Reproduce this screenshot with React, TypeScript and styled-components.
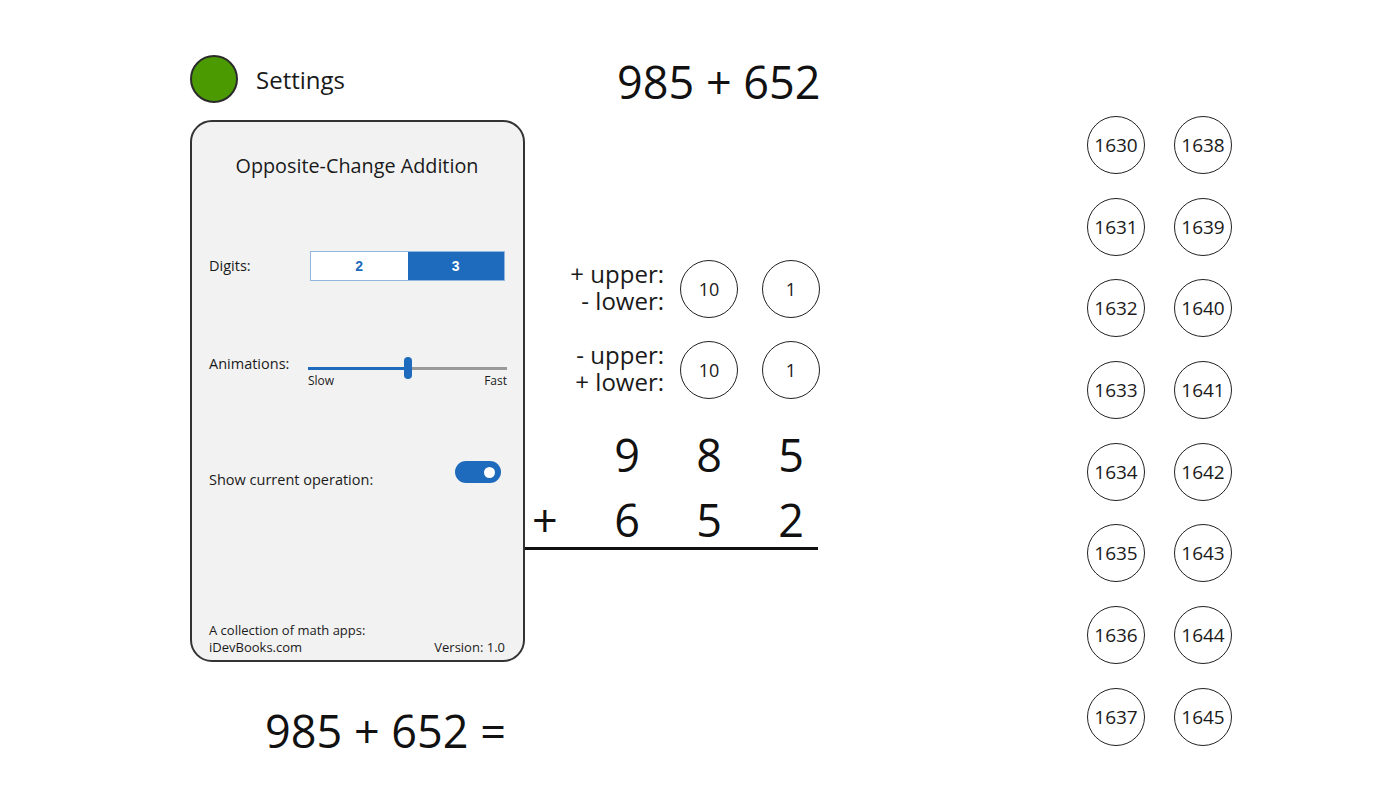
import styled, { createGlobalStyle } from "styled-components";

const GlobalStyle = createGlobalStyle`
    html, body {
        margin: 0;
        padding: 0;
        background: #ffffff;
    }
    body {
        font-family: "Open Sans", "Noto Sans", sans-serif;
        color: #111;
    }
`;

const Page = styled.div`
    display: flex;
    align-items: flex-start;
    padding: 55px 0 0 190px;
    width: 1399px;
    height: 787px;
    box-sizing: border-box;
    overflow: hidden;
`;

const LeftColumn = styled.div`
    width: 335px;
    display: flex;
    flex-direction: column;
`;

const Header = styled.div`
    display: flex;
    align-items: center;
    gap: 18px;
    height: 48px;
`;

const StatusDot = styled.div`
    width: 48px;
    height: 48px;
    border-radius: 50%;
    background: #4c9a02;
    border: 2px solid #2b2b2b;
    box-sizing: border-box;
`;

const HeaderText = styled.span`
    font-size: 24px;
    color: #1a1a1a;
`;

const Panel = styled.div`
    margin-top: 17px;
    height: 542px;
    box-sizing: border-box;
    border: 2px solid #333;
    border-radius: 22px;
    background: #f2f2f2;
    padding: 0 18px 4px 17px;
    display: flex;
    flex-direction: column;
`;

const PanelTitle = styled.div`
    margin-top: 31px;
    text-align: center;
    font-size: 19.8px;
    line-height: 26px;
    color: #1a1a1a;
`;

const SettingRow = styled.div<{ $top: number; $align?: string }>`
    margin-top: ${p => p.$top}px;
    display: flex;
    justify-content: space-between;
    align-items: ${p => p.$align || "center"};
`;

const Label = styled.span<{ $shift?: number }>`
    font-size: 14.5px;
    line-height: 20px;
    color: #1a1a1a;
    margin-top: ${p => p.$shift || 0}px;
`;

const Segmented = styled.div`
    display: flex;
    width: 195px;
    height: 30px;
    border: 1px solid #93b6de;
    box-sizing: border-box;
`;

const Segment = styled.div<{ $active?: boolean }>`
    flex: 1;
    display: flex;
    align-items: center;
    justify-content: center;
    font-family: "Liberation Sans", Arial, sans-serif;
    font-weight: bold;
    font-size: 14px;
    background: ${p => (p.$active ? "#1e6bbd" : "#ffffff")};
    color: ${p => (p.$active ? "#ffffff" : "#1e6bbd")};
`;

const SliderBox = styled.div`
    width: 199px;
    margin-right: -2px;
    display: flex;
    flex-direction: column;
`;

const SliderTrack = styled.div`
    position: relative;
    height: 22px;
    display: flex;
    align-items: center;
`;

const TrackPart = styled.div<{ $filled?: boolean }>`
    height: 3px;
    flex: ${p => (p.$filled ? "0 0 100px" : "1")};
    background: ${p => (p.$filled ? "#1e6bbd" : "#9a9a9a")};
`;

const Thumb = styled.div`
    position: absolute;
    left: 96px;
    top: 0;
    width: 8px;
    height: 22px;
    border-radius: 4px;
    background: #1e6bbd;
`;

const SliderLabels = styled.div`
    margin-top: -5px;
    display: flex;
    justify-content: space-between;
    font-size: 12px;
    line-height: 14px;
    color: #1a1a1a;
`;

const Toggle = styled.div`
    width: 46px;
    height: 22px;
    border-radius: 11px;
    background: #1e6bbd;
    margin: 0 4px 7px 0;
    display: flex;
    align-items: center;
    justify-content: flex-end;
    padding-right: 6px;
    box-sizing: border-box;
`;

const ToggleKnob = styled.div`
    width: 11px;
    height: 11px;
    border-radius: 50%;
    background: #fff;
`;

const Footer = styled.div`
    margin-top: auto;
    font-size: 13px;
    line-height: 17px;
    color: #1a1a1a;
`;

const FooterLine = styled.div`
    display: flex;
    justify-content: space-between;
`;

const BigText = styled.div`
    font-size: 45px;
    line-height: 54px;
    color: #111;
    white-space: pre;
`;

const BottomEquation = styled(BigText)`
    margin-top: 42px;
    padding-left: 75px;
`;

const MiddleColumn = styled.div`
    width: 307px;
    display: flex;
    flex-direction: column;
`;

const TopEquation = styled(BigText)`
    padding-left: 92px;
`;

const Row = styled.div<{ $top: number }>`
    margin-top: ${p => p.$top}px;
    display: grid;
    grid-template-columns: 61px 82px 82px 82px;
    align-items: center;
`;

const ChangeLabel = styled.div`
    grid-column: 1 / span 2;
    text-align: right;
    padding: 0 4px 4px 0;
    font-size: 24px;
    line-height: 27px;
    color: #1a1a1a;
    white-space: nowrap;
`;

const Circle = styled.div<{ $size?: number }>`
    justify-self: center;
    width: 58px;
    height: 58px;
    border-radius: 50%;
    border: 1.5px solid #222;
    box-sizing: border-box;
    display: flex;
    align-items: center;
    justify-content: center;
    font-size: ${p => p.$size || 18}px;
    color: #1a1a1a;
    background: #fff;
`;

const Digit = styled(BigText)`
    text-align: center;
`;

const PlusSign = styled(BigText)`
    padding-left: 7px;
`;

const SumLine = styled.div`
    margin-top: 0;
    width: 293px;
    height: 3px;
    background: #111;
`;

const RightColumn = styled.div`
    margin: 61px 0 0 255px;
    display: grid;
    grid-template-rows: repeat(8, 58px);
    grid-template-columns: 58px 58px;
    grid-auto-flow: column;
    column-gap: 29px;
    row-gap: 23.7px;
`;

const answers = Array.from({ length: 16 }, (_, i) => 1630 + i);

export default function App() {
    return <>
        <GlobalStyle />
        <Page>
            <LeftColumn>
                <Header>
                    <StatusDot />
                    <HeaderText>Settings</HeaderText>
                </Header>

                <Panel>
                    <PanelTitle>Opposite-Change Addition</PanelTitle>

                    <SettingRow $top={72}>
                        <Label>Digits:</Label>
                        <Segmented>
                            <Segment>2</Segment>
                            <Segment $active>3</Segment>
                        </Segmented>
                    </SettingRow>

                    <SettingRow $top={76} $align="flex-start">
                        <Label $shift={-3}>Animations:</Label>
                        <SliderBox>
                            <SliderTrack>
                                <TrackPart $filled />
                                <TrackPart />
                                <Thumb />
                            </SliderTrack>
                            <SliderLabels>
                                <span>Slow</span>
                                <span>Fast</span>
                            </SliderLabels>
                        </SliderBox>
                    </SettingRow>

                    <SettingRow $top={73} $align="flex-end">
                        <Label>Show current operation:</Label>
                        <Toggle><ToggleKnob /></Toggle>
                    </SettingRow>

                    <Footer>
                        <div>A collection of math apps:</div>
                        <FooterLine>
                            <span>iDevBooks.com</span>
                            <span>Version: 1.0</span>
                        </FooterLine>
                    </Footer>
                </Panel>

                <BottomEquation>985 + 652 =</BottomEquation>
            </LeftColumn>

            <MiddleColumn>
                <TopEquation>985 + 652</TopEquation>

                <Row $top={151}>
                    <ChangeLabel>+ upper:<br />- lower:</ChangeLabel>
                    <Circle>10</Circle>
                    <Circle>1</Circle>
                </Row>
                <Row $top={23}>
                    <ChangeLabel>- upper:<br />+ lower:</ChangeLabel>
                    <Circle>10</Circle>
                    <Circle>1</Circle>
                </Row>

                <Row $top={29}>
                    <span />
                    <Digit>9</Digit>
                    <Digit>8</Digit>
                    <Digit>5</Digit>
                </Row>
                <Row $top={11}>
                    <PlusSign>+</PlusSign>
                    <Digit>6</Digit>
                    <Digit>5</Digit>
                    <Digit>2</Digit>
                </Row>
                <SumLine />
            </MiddleColumn>

            <RightColumn>
                {answers.map(n => <Circle key={n} $size={19}>{n}</Circle>)}
            </RightColumn>
        </Page>
    </>;
}
